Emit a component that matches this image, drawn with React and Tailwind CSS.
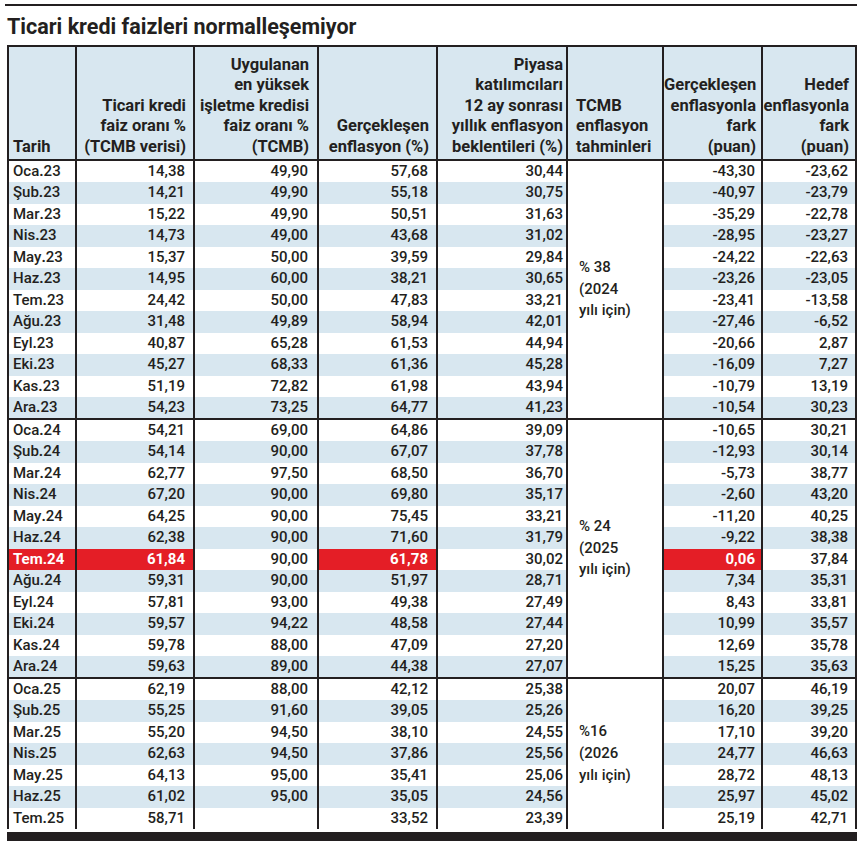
import React from "react";

const groups = [
  {
    note: ["% 38", "(2024", "yılı için)"],
    rows: [
      ["Oca", "23", "14,38", "49,90", "57,68", "30,44", "-43,30", "-23,62"],
      ["Şub", "23", "14,21", "49,90", "55,18", "30,75", "-40,97", "-23,79"],
      ["Mar", "23", "15,22", "49,90", "50,51", "31,63", "-35,29", "-22,78"],
      ["Nis", "23", "14,73", "49,00", "43,68", "31,02", "-28,95", "-23,27"],
      ["May", "23", "15,37", "50,00", "39,59", "29,84", "-24,22", "-22,63"],
      ["Haz", "23", "14,95", "60,00", "38,21", "30,65", "-23,26", "-23,05"],
      ["Tem", "23", "24,42", "50,00", "47,83", "33,21", "-23,41", "-13,58"],
      ["Ağu", "23", "31,48", "49,89", "58,94", "42,01", "-27,46", "-6,52"],
      ["Eyl", "23", "40,87", "65,28", "61,53", "44,94", "-20,66", "2,87"],
      ["Eki", "23", "45,27", "68,33", "61,36", "45,28", "-16,09", "7,27"],
      ["Kas", "23", "51,19", "72,82", "61,98", "43,94", "-10,79", "13,19"],
      ["Ara", "23", "54,23", "73,25", "64,77", "41,23", "-10,54", "30,23"],
    ],
  },
  {
    note: ["% 24", "(2025", "yılı için)"],
    rows: [
      ["Oca", "24", "54,21", "69,00", "64,86", "39,09", "-10,65", "30,21"],
      ["Şub", "24", "54,14", "90,00", "67,07", "37,78", "-12,93", "30,14"],
      ["Mar", "24", "62,77", "97,50", "68,50", "36,70", "-5,73", "38,77"],
      ["Nis", "24", "67,20", "90,00", "69,80", "35,17", "-2,60", "43,20"],
      ["May", "24", "64,25", "90,00", "75,45", "33,21", "-11,20", "40,25"],
      ["Haz", "24", "62,38", "90,00", "71,60", "31,79", "-9,22", "38,38"],
      ["Tem", "24", "61,84", "90,00", "61,78", "30,02", "0,06", "37,84", true],
      ["Ağu", "24", "59,31", "90,00", "51,97", "28,71", "7,34", "35,31"],
      ["Eyl", "24", "57,81", "93,00", "49,38", "27,49", "8,43", "33,81"],
      ["Eki", "24", "59,57", "94,22", "48,58", "27,44", "10,99", "35,57"],
      ["Kas", "24", "59,78", "88,00", "47,09", "27,20", "12,69", "35,78"],
      ["Ara", "24", "59,63", "89,00", "44,38", "27,07", "15,25", "35,63"],
    ],
  },
  {
    note: ["%16", "(2026", "yılı için)"],
    rows: [
      ["Oca", "25", "62,19", "88,00", "42,12", "25,38", "20,07", "46,19"],
      ["Şub", "25", "55,25", "91,60", "39,05", "25,26", "16,20", "39,25"],
      ["Mar", "25", "55,20", "94,50", "38,10", "24,55", "17,10", "39,20"],
      ["Nis", "25", "62,63", "94,50", "37,86", "25,56", "24,77", "46,63"],
      ["May", "25", "64,13", "95,00", "35,41", "25,06", "28,72", "48,13"],
      ["Haz", "25", "61,02", "95,00", "35,05", "24,56", "25,97", "45,02"],
      ["Tem", "25", "58,71", "", "33,52", "23,39", "25,19", "42,71"],
    ],
  },
];

const App = () => {
  const line = "border-x-2 border-[#231f20]";
  const hd = `${line} align-bottom pb-[2px] leading-[20.4px] font-bold whitespace-nowrap`;

  return (
    <div
      className="w-[860px] h-[841px] bg-white text-[#231f20] overflow-hidden"
      style={{ fontFamily: "Roboto, 'Noto Sans', sans-serif" }}
    >
      {/* top rule */}
      <div className="ml-[5px] mt-[4px] w-[852px] h-[2px] bg-[#231f20]" />

      {/* title */}
      <h1 className="ml-[7px] mt-[8px] text-[21.5px] leading-[26px] font-bold">
        Ticari kredi faizleri normalleşemiyor
      </h1>

      <table className="ml-[7px] mt-[5px] w-[850px] table-fixed border-collapse text-[15px] font-medium">
        <colgroup>
          <col className="w-[68px]" />
          <col className="w-[118px]" />
          <col className="w-[124px]" />
          <col className="w-[119px]" />
          <col className="w-[130px]" />
          <col className="w-[96px]" />
          <col className="w-[99px]" />
          <col className="w-[94px]" />
        </colgroup>
        <thead>
          <tr className="bg-[#d8e7f0] h-[114px] border-y-2 border-[#231f20] text-[16.5px]">
            <th className={`${hd} text-left pl-[4px]`}>Tarih</th>
            <th className={`${hd} text-right pr-[7px]`}>
              Ticari kredi
              <br />
              faiz oranı %
              <br />
              (TCMB verisi)
            </th>
            <th className={`${hd} text-right pr-[8px]`}>
              Uygulanan
              <br />
              en yüksek
              <br />
              işletme kredisi
              <br />
              faiz oranı %
              <br />
              (TCMB)
            </th>
            <th className={`${hd} text-right pr-[7px]`}>
              Gerçekleşen
              <br />
              enflasyon (%)
            </th>
            <th className={`${hd} text-right pr-[3px]`}>
              Piyasa
              <br />
              katılımcıları
              <br />
              12 ay sonrası
              <br />
              yıllık enflasyon
              <br />
              beklentileri (%)
            </th>
            <th className={`${hd} text-left pl-[8px]`}>
              TCMB
              <br />
              enflasyon
              <br />
              tahminleri
            </th>
            <th className={`${hd} text-right pr-[5px]`}>
              Gerçekleşen
              <br />
              enflasyonla
              <br />
              fark
              <br />
              (puan)
            </th>
            <th className={`${hd} text-right pr-[6px]`}>
              Hedef
              <br />
              enflasyonla
              <br />
              fark
              <br />
              (puan)
            </th>
          </tr>
        </thead>
        {groups.map((g, gi) => (
          <tbody
            key={gi}
            className={gi < groups.length - 1 ? "border-b-2 border-[#231f20]" : ""}
          >
            {g.rows.map((r, ri) => {
              const stripe = ri % 2 === 1 ? "bg-[#d8e7f0]" : "bg-white";
              const hot = r[8];
              const red = "bg-[#e41e26] text-white font-bold";
              return (
                <tr key={ri} className={`h-[21.5px] leading-[21px] ${stripe}`}>
                  <td className={`${line} pl-[4px] ${hot ? red : ""}`}>
                    {r[0]}
                    <span className="font-bold">.</span>
                    {r[1]}
                  </td>
                  <td className={`${line} text-right pr-[8px] ${hot ? red : ""}`}>
                    {r[2]}
                  </td>
                  <td className={`${line} text-right pr-[9px]`}>{r[3]}</td>
                  <td className={`${line} text-right pr-[8px] ${hot ? red : ""}`}>
                    {r[4]}
                  </td>
                  <td className={`${line} text-right pr-[3px]`}>{r[5]}</td>
                  {ri === 0 && (
                    <td
                      rowSpan={g.rows.length}
                      className={`${line} bg-white align-middle pl-[11px] leading-[21.7px] text-[15px]`}
                    >
                      {g.note[0]}
                      <br />
                      {g.note[1]}
                      <br />
                      {g.note[2]}
                    </td>
                  )}
                  <td className={`${line} text-right pr-[6px] ${hot ? red : ""}`}>
                    {r[6]}
                  </td>
                  <td className={`${line} text-right pr-[7px]`}>{r[7]}</td>
                </tr>
              );
            })}
          </tbody>
        ))}
      </table>

      {/* bottom rule */}
      <div className="ml-[7px] mt-[3px] w-[850px] h-[10px] bg-[#231f20]" />
    </div>
  );
};

export default App;
